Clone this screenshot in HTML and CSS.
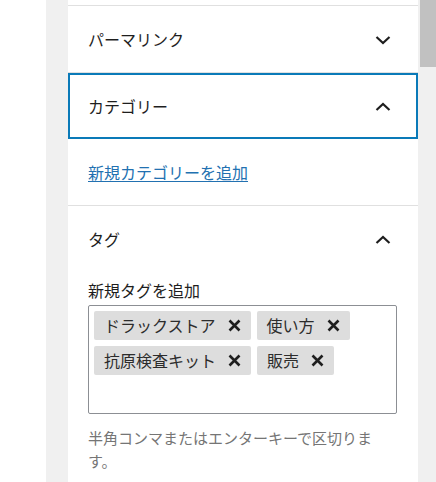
FILE: index.html
```html
<!DOCTYPE html>
<html lang="ja">
<head>
<meta charset="utf-8">
<link rel="stylesheet" href="styles.css">
</head>
<body>
<div class="screen">
  <div class="blank"></div>
  <div class="gutter"></div>
  <div class="panel">
    <div class="top"></div>
    <section class="section">
      <div class="header">
        <span class="title">パーマリンク</span>
        <svg class="chev" width="16" height="10" viewBox="0 0 16 10"><polyline points="1.5,2 8,8 14.5,2" fill="none" stroke="#1e1e1e" stroke-width="2.2"/></svg>
      </div>
    </section>
    <section class="section">
      <div class="header focused">
        <span class="title">カテゴリー</span>
        <svg class="chev" width="16" height="10" viewBox="0 0 16 10"><polyline points="1.5,8 8,2 14.5,8" fill="none" stroke="#1e1e1e" stroke-width="2.2"/></svg>
      </div>
      <div class="cat-body">
        <a class="link" href="#">新規カテゴリーを追加</a>
      </div>
    </section>
    <section class="section">
      <div class="header">
        <span class="title">タグ</span>
        <svg class="chev" width="16" height="10" viewBox="0 0 16 10"><polyline points="1.5,8 8,2 14.5,8" fill="none" stroke="#1e1e1e" stroke-width="2.2"/></svg>
      </div>
      <div class="tag-body">
        <div class="label">新規タグを追加</div>
        <div class="tagbox">
          <span class="tag">ドラックストア<svg class="x" width="13" height="13" viewBox="0 0 13 13"><path d="M1.5 1.5L11.5 11.5M11.5 1.5L1.5 11.5" stroke="#1e1e1e" stroke-width="2.6"/></svg></span>
          <span class="tag">使い方<svg class="x" width="13" height="13" viewBox="0 0 13 13"><path d="M1.5 1.5L11.5 11.5M11.5 1.5L1.5 11.5" stroke="#1e1e1e" stroke-width="2.6"/></svg></span>
          <span class="tag">抗原検査キット<svg class="x" width="13" height="13" viewBox="0 0 13 13"><path d="M1.5 1.5L11.5 11.5M11.5 1.5L1.5 11.5" stroke="#1e1e1e" stroke-width="2.6"/></svg></span>
          <span class="tag">販売<svg class="x" width="13" height="13" viewBox="0 0 13 13"><path d="M1.5 1.5L11.5 11.5M11.5 1.5L1.5 11.5" stroke="#1e1e1e" stroke-width="2.6"/></svg></span>
        </div>
        <p class="help">半角コンマまたはエンターキーで区切ります。</p>
      </div>
    </section>
  </div>
  <div class="scrollbar"><div class="thumb"></div></div>
</div>
</body>
</html>
```

FILE: styles.css
```css
html, body {
  margin: 0;
  padding: 0;
  background: #fff;
}
.screen {
  display: flex;
  width: 436px;
  height: 482px;
  overflow: hidden;
  font-family: "Noto Sans CJK JP", "Noto Sans", sans-serif;
  color: #1e1e1e;
}
.blank {
  width: 46px;
  flex: none;
  background: #fff;
}
.gutter {
  width: 22px;
  flex: none;
  background: #f0f0f0;
}
.panel {
  width: 350px;
  flex: none;
  background: #fff;
  display: flex;
  flex-direction: column;
}
.top {
  height: 5px;
  flex: none;
}
.section {
  border-top: 1px solid #e0e0e0;
}
.header {
  height: 66px;
  box-sizing: border-box;
  display: flex;
  align-items: center;
  justify-content: space-between;
  padding: 0 27px 0 20px;
}
.header.focused {
  box-shadow: inset 0 0 0 2px #0a7ab8;
}
.title {
  font-size: 16px;
  line-height: 24px;
}
.chev {
  display: block;
  margin-top: 2px;
}
.cat-body {
  padding: 21px 20px 21px;
}
.link {
  display: block;
  width: max-content;
  font-size: 16px;
  line-height: 24px;
  color: #2271b1;
  text-decoration: underline;
  text-underline-offset: 2px;
}
.tag-body {
  padding: 6px 20px 0;
}
.label {
  font-size: 16px;
  line-height: 24px;
  margin-bottom: 3px;
}
.tagbox {
  width: 309px;
  height: 109px;
  box-sizing: border-box;
  border: 1px solid #8c8f94;
  border-radius: 2px;
  padding: 5px;
  display: flex;
  flex-wrap: wrap;
  align-content: flex-start;
  gap: 6px;
}
.tag {
  display: flex;
  align-items: center;
  height: 29px;
  padding: 0 10px;
  background: #dddddd;
  border-radius: 2px;
  font-size: 16px;
  line-height: 29px;
  color: #2c2c2c;
}
.x {
  display: block;
  margin-left: 12px;
}
.help {
  margin: 12px 0 0;
  width: 300px;
  font-size: 15px;
  line-height: 23px;
  color: #757575;
}
.scrollbar {
  width: 18px;
  flex: none;
  background: #f0f0f0;
}
.thumb {
  width: 16px;
  height: 67px;
  margin-left: 2px;
  background: #c1c1c1;
}
```
